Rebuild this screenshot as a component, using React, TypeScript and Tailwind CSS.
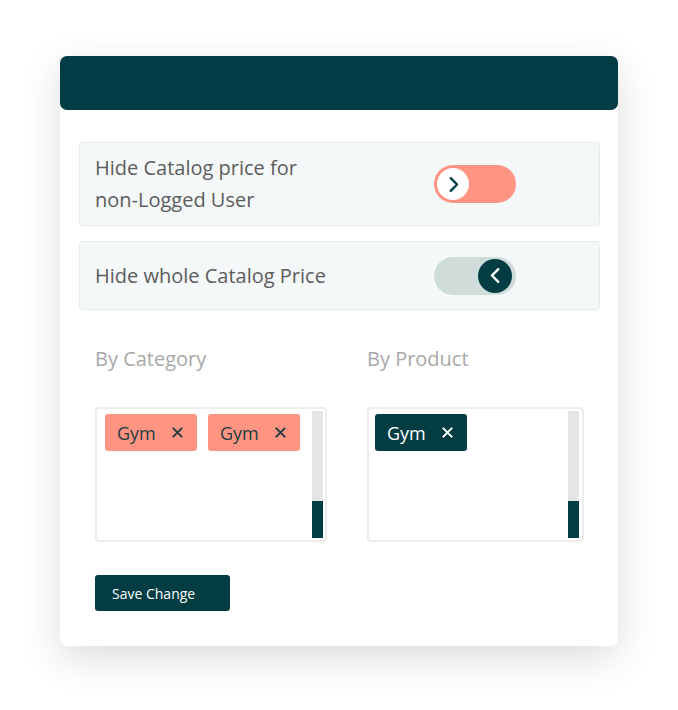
import { useState } from "react";

const Chevron = ({ dir, className }: { dir: "left" | "right"; className: string }) => (
  <svg viewBox="0 0 24 24" className={className} fill="none" stroke="currentColor" strokeWidth={3} strokeLinecap="round" strokeLinejoin="round">
    {dir === "right" ? <path d="M8.5 4l8 8-8 8" /> : <path d="M15.5 4l-8 8 8 8" />}
  </svg>
);

const Cross = () => (
  <svg viewBox="0 0 12 12" className="w-[11px] h-[11px]" fill="none" stroke="currentColor" strokeWidth={2.2} strokeLinecap="round">
    <path d="M1.5 1.5l9 9M10.5 1.5l-9 9" />
  </svg>
);

const Toggle = ({ on }: { on: boolean }) =>
  on ? (
    <div className="w-[82px] h-[38px] rounded-full bg-[#fe9582] flex items-center pl-[3px]">
      <div className="w-[32px] h-[32px] rounded-full bg-white flex items-center justify-center text-[#033d44]">
        <Chevron dir="right" className="w-[19px] h-[19px]" />
      </div>
    </div>
  ) : (
    <div className="w-[82px] h-[38px] rounded-full bg-[#cfdcda] flex items-center justify-end pr-[4px]">
      <div className="w-[34px] h-[34px] rounded-full bg-[#033d44] flex items-center justify-center text-white">
        <Chevron dir="left" className="w-[19px] h-[19px]" />
      </div>
    </div>
  );

const Tag = ({ dark }: { dark?: boolean }) => (
  <div
    className={
      dark
        ? "h-[37px] w-[92px] rounded-[3px] bg-[#033d44] text-white flex items-center pl-[12px] gap-[16px]"
        : "h-[37px] w-[92px] rounded-[3px] bg-[#fe9582] text-[#1f3d40] flex items-center pl-[12px] gap-[16px]"
    }
  >
    <span className="text-[18px] leading-none">Gym</span>
    <Cross />
  </div>
);

const Scroll = () => (
  <div className="w-[11px] flex flex-col">
    <div className="flex-1 bg-[#e5e5e5]" />
    <div className="h-[37px] bg-[#033d44]" />
  </div>
);

export default function App() {
  const [a] = useState(true);
  const [b] = useState(false);

  return (
    <div className="min-h-screen bg-white pt-[56px] pl-[60px] font-['Open_Sans',sans-serif]">
      <div className="w-[558px] h-[590px] bg-white rounded-[7px] shadow-[0_12px_40px_rgba(0,0,0,0.14)]">
        <div className="h-[54px] bg-[#023d45] rounded-[7px]" />

        <div className="pt-[32px] pl-[19px] pr-[18px]">
          <div className="h-[84px] bg-[#f5f8f9] border border-[#e6eaeb] rounded-[4px] flex items-center pl-[15px]">
            <div className="w-[339px] text-[20px] leading-[32px] text-[#5c5c5c]">
              Hide Catalog price for
              <br />
              non-Logged User
            </div>
            <Toggle on={a} />
          </div>

          <div className="mt-[15px] h-[69px] bg-[#f5f8f9] border border-[#e6eaeb] rounded-[4px] flex items-center pl-[15px]">
            <div className="w-[339px] text-[20px] leading-[32px] text-[#5c5c5c]">Hide whole Catalog Price</div>
            <Toggle on={b} />
          </div>

          <div className="flex pl-[16px] mt-[35px]">
            <div className="w-[272px]">
              <div className="text-[20px] leading-[28px] text-[#a8a8a8]">By Category</div>
              <div className="mt-[34px] w-[232px] h-[135px] border-2 border-[#ededed] rounded-[4px] flex justify-between pl-[8px] pr-[2px] py-[2px]">
                <div className="flex gap-[11px] pt-[3px]">
                  <Tag />
                  <Tag />
                </div>
                <Scroll />
              </div>
            </div>
            <div>
              <div className="text-[20px] leading-[28px] text-[#a8a8a8]">By Product</div>
              <div className="mt-[34px] w-[217px] h-[135px] border-2 border-[#ededed] rounded-[4px] flex justify-between pl-[6px] pr-[3px] py-[2px]">
                <div className="pt-[3px]">
                  <Tag dark />
                </div>
                <Scroll />
              </div>
            </div>
          </div>

          <div className="pl-[16px] mt-[33px]">
            <button className="w-[135px] h-[36px] rounded-[3px] bg-[#033d44] text-white text-[14px] text-left pl-[17px]">
              Save Change
            </button>
          </div>
        </div>
      </div>
    </div>
  );
}
